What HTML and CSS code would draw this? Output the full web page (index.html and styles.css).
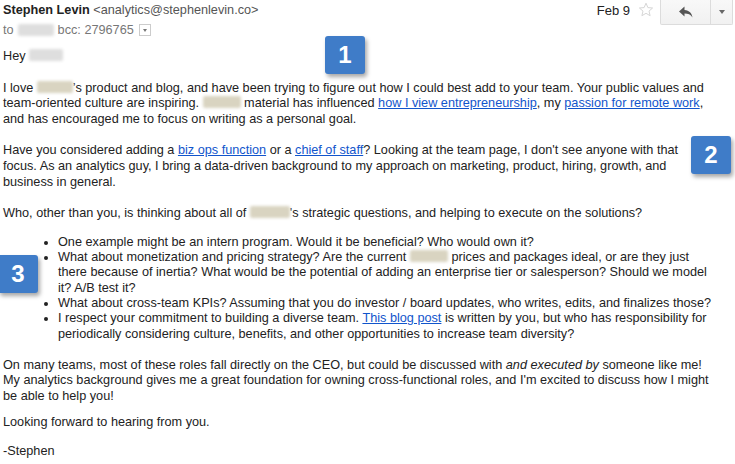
FILE: index.html
```html
<!DOCTYPE html>
<html>
<head>
    <title>Email</title>
    <link rel="stylesheet" href="styles.css">
</head>
<body>
<div class="mail">
    <header class="head">
        <div class="from">
            <div class="sender"><b>Stephen Levin</b> <span class="addr">&lt;analytics@stephenlevin.co&gt;</span></div>
            <div class="to">to <span class="blur gray to-name"></span> bcc: 2796765 <span class="more"></span></div>
        </div>
        <div class="meta">
            <span class="date">Feb 9</span>
            <svg class="star" width="16" height="16" viewBox="0 0 16 16"><path d="M8 1.2l1.9 4.4 4.7.4-3.6 3.1 1.1 4.6L8 11.3l-4.1 2.4 1.1-4.6L1.4 6l4.7-.4z" fill="none" stroke="#d6d6d6" stroke-width="1"/></svg>
            <div class="btns">
                <span class="btn reply"><svg width="16" height="14" viewBox="0 0 16 14"><path d="M6.5 1.5L1 6.5l5.5 5V8.6c3.6 0 6 .9 8 3.9-.7-4.2-3.1-6.9-8-7.4z" fill="#555"/></svg></span>
                <span class="btn drop"><span class="caret"></span></span>
            </div>
        </div>
    </header>

    <div class="body">
        <p class="hey">Hey <span class="blur gray hey-name"></span></p>

        <p>I love <span class="blur w36"></span>’s product and blog, and have been trying to figure out how I could best add to your team. Your public values and<br>
        team-oriented culture are inspiring. <span class="blur w38"></span> material has influenced <a href="#">how I view entrepreneurship</a>, my <a href="#">passion for remote work</a>,<br>
        and has encouraged me to focus on writing as a personal goal.</p>

        <p>Have you considered adding a <a href="#">biz ops function</a> or a <a href="#">chief of staff</a>? Looking at the team page, I don't see anyone with that<br>
        focus. As an analytics guy, I bring a data-driven background to my approach on marketing, product, hiring, growth, and<br>
        business in general.</p>

        <p class="who">Who, other than you, is thinking about all of <span class="blur w40"></span>'s strategic questions, and helping to execute on the solutions?</p>

        <ul>
            <li>One example might be an intern program. Would it be beneficial? Who would own it?</li>
            <li>What about monetization and pricing strategy? Are the current <span class="blur w38"></span> prices and packages ideal, or are they just<br>
            there because of inertia? What would be the potential of adding an enterprise tier or salesperson? Should we model<br>
            it? A/B test it?</li>
            <li>What about cross-team KPIs? Assuming that you do investor / board updates, who writes, edits, and finalizes those?</li>
            <li>I respect your commitment to building a diverse team. <a href="#">This blog post</a> is written by you, but who has responsibility for<br>
            periodically considering culture, benefits, and other opportunities to increase team diversity?</li>
        </ul>

        <p class="close">On many teams, most of these roles fall directly on the CEO, but could be discussed with <i>and executed by</i> someone like me!<br>
        My analytics background gives me a great foundation for owning cross-functional roles, and I'm excited to discuss how I might<br>
        be able to help you!</p>

        <p class="looking">Looking forward to hearing from you.</p>

        <p class="sign">-Stephen</p>

        <span class="badge b1">1</span>
        <span class="badge b2">2</span>
        <span class="badge b3">3</span>
    </div>
</div>
</body>
</html>
```

FILE: styles.css
```css
body{
    margin: 0;
    background-color: #fff;
    font-family: "Liberation Sans", Arial, sans-serif;
    font-size: 12.7px;
    color: #222;
}

.mail{
    position: relative;
    width: 735px;
    height: 464px;
    overflow: hidden;
}

.head{
    display: flex;
    justify-content: space-between;
    padding-left: 3px;
}

.sender{
    padding-top: 2px;
    line-height: 16px;
}
.sender b{
    color: #222;
}
.addr{
    color: #555;
}

.to{
    margin-top: 4px;
    line-height: 16px;
    color: #777;
    display: flex;
    align-items: center;
    gap: 4px;
}

.more{
    display: inline-block;
    width: 10px;
    height: 10px;
    border: 1px solid #ccc;
    position: relative;
    margin-left: 1px;
}
.more::after{
    content: "";
    position: absolute;
    left: 3px;
    top: 4px;
    border-left: 2.5px solid transparent;
    border-right: 2.5px solid transparent;
    border-top: 3px solid #777;
}

.meta{
    display: flex;
    align-items: flex-start;
    padding-right: 2px;
}
.date{
    margin-top: 3px;
    line-height: 16px;
    color: #222;
    font-size: 13px;
}
.star{
    margin: 2px 6px 0 8px;
}

.btns{
    display: flex;
    height: 24px;
    border: 1px solid #dcdcdc;
    border-top: none;
    border-radius: 0 0 2px 2px;
    background: linear-gradient(#f8f8f8, #f1f1f1);
}
.btn{
    display: flex;
    align-items: center;
    justify-content: center;
}
.reply{
    width: 49px;
    border-right: 1px solid #dcdcdc;
}
.drop{
    width: 21px;
}
.caret{
    border-left: 3px solid transparent;
    border-right: 3px solid transparent;
    border-top: 4px solid #666;
}

.body{
    padding-left: 3px;
    line-height: 15.6px;
    white-space: nowrap;
}

.body p{
    margin: 16px 0;
}
.body p.hey{
    margin-top: 11px;
    margin-bottom: 13px;
}
.body p.who{
    margin-bottom: 0;
}

.body ul{
    margin: 13px 0 14px 0;
    padding-left: 55px;
}
.body li{
    line-height: 15.3px;
}

.body p.close{
    margin-bottom: 10px;
}
.body p.looking{
    margin-top: 10px;
    margin-bottom: 14px;
}
.body p.sign{
    margin-top: 14px;
}

a{
    color: #15c;
}

.blur{
    display: inline-block;
    height: 12px;
    vertical-align: -1px;
    background-color: #d9d4c1;
    filter: blur(1.5px);
    border-radius: 2px;
}
.blur.gray{
    background-color: #dedede;
}
.to-name{
    width: 36px;
}
.hey-name{
    width: 34px;
}
.w36{ width: 36px; }
.w38{ width: 38px; }
.w40{ width: 40px; }

.badge{
    position: absolute;
    width: 40px;
    height: 38px;
    background-color: #3f7cc8;
    border-radius: 3px;
    box-shadow: 2px 3px 4px rgba(0, 0, 0, 0.35);
    color: #fff;
    font-size: 24px;
    font-weight: bold;
    line-height: 38px;
    text-align: center;
}
.b1{
    left: 325px;
    top: 36px;
}
.b2{
    left: 691px;
    top: 136px;
}
.b3{
    left: -2px;
    top: 255px;
}
```
